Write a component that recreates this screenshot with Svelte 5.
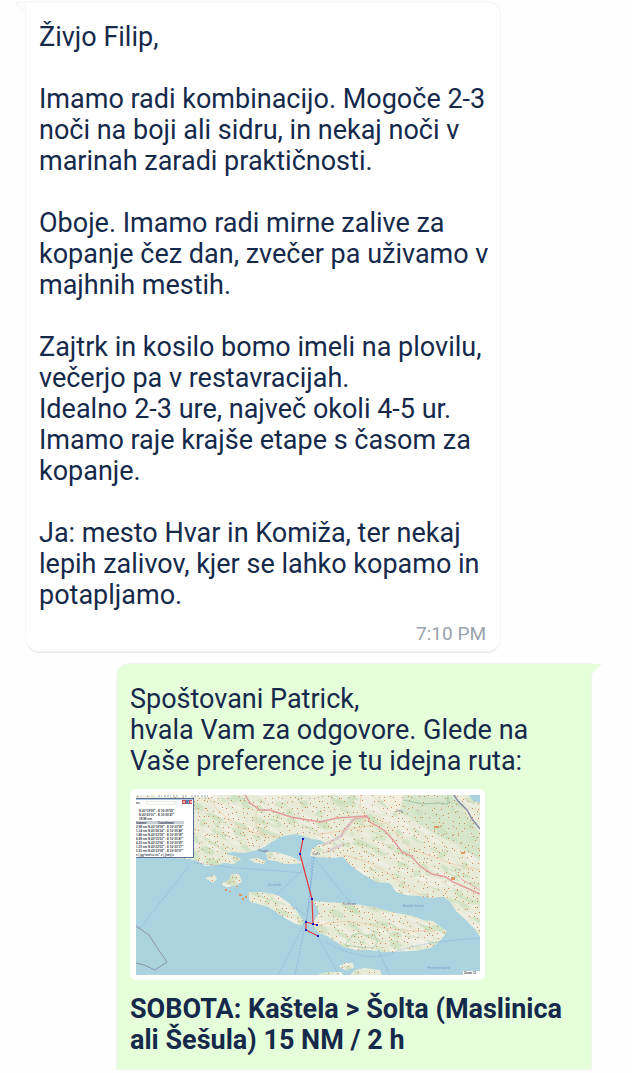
<script lang="ts">
	interface Message {
		side: 'in' | 'out';
		text: string;
		time?: string;
		map?: boolean;
		heading?: string;
	}

	const messages: Message[] = [
		{
			side: 'in',
			text: `Živjo Filip,

Imamo radi kombinacijo. Mogoče 2-3 noči na boji ali sidru, in nekaj noči v marinah zaradi praktičnosti.

Oboje. Imamo radi mirne zalive za kopanje čez dan, zvečer pa uživamo v majhnih mestih.

Zajtrk in kosilo bomo imeli na plovilu, večerjo pa v restavracijah.
Idealno 2-3 ure, največ okoli 4-5 ur. Imamo raje krajše etape s časom za kopanje.

Ja: mesto Hvar in Komiža, ter nekaj lepih zalivov, kjer se lahko kopamo in potapljamo.`,
			time: '7:10 PM'
		},
		{
			side: 'out',
			text: `Spoštovani Patrick,
hvala Vam za odgovore. Glede na Vaše preference je tu idejna ruta:`,
			map: true,
			heading: 'SOBOTA: Kaštela > Šolta (Maslinica ali Šešula) 15 NM / 2 h'
		}
	];

	const land = [
		'M0 0H344V142L337 132 329 124 320 116 314 107 308 102 295 103 283 101 270 100 260 97 257 92 253 88 243 88 237 85 228 80 220 74 213 69 207 62 193 63 180 62 174 61 176 54 182 50 190 48 184 45 176 44 170 42 160 39 147 41 137 46 128 52 117 56 108 58 96 57 90 59 98 61 105 64 98 69 88 68 78 71 69 71 60 65 53 64 0 60Z',
		'M112 97L122 97 133 98 141 100 147 104 154 109 160 115 167 125 167 130 160 129 151 124 142 118 132 112 122 109 114 107Z',
		'M177 106L190 107 203 108 220 109 237 112 256 117 277 121 287 125 297 126 303 131 311 136 308 141 302 148 294 153 280 156 250 157 234 155 220 155 208 152 200 147 191 141 183 138 178 131 178 126 183 118 181 112Z',
		'M129 57L140 57 150 60 157 62 163 66 168 68 158 69 148 69 140 66 132 65Z',
		'M113 64L121 63 130 66 128 69 119 68Z',
		'M69 83L79 80 81 84 77 88Z',
		'M87 88L94 84 95 79 103 79 106 87 99 91 90 92Z',
		'M86 88L96 88 94 91 87 91Z',
		'M203 171L209 168 217 168 218 173 209 175Z',
		'M183 179L193 177 205 177 207 180 183 180Z',
		'M214 180L219 175 229 173 244 175 246 180Z'
	];

	// Park-Miller generator, so the terrain is the same on every render
	let seed = 4711;
	function rand() {
		seed = (seed * 16807) % 2147483647;
		return seed / 2147483647;
	}

	const woods = Array.from({ length: 430 }, () => {
		const x = rand() * 344;
		const y = rand() * 180;
		return { x, y, rx: 2 + rand() * 8, ry: 1 + rand() * 3 };
	});
	const fields = Array.from({ length: 500 }, () => ({ x: rand() * 344, y: rand() * 180, r: 1 + rand() * 4 }));

	// one village per 5x5 cell, shifted inside it
	const villages: { x: number; y: number }[] = [];
	for (let y = 0; y < 180; y += 5) {
		for (let x = 0; x < 344; x += 5) {
			if (rand() < 0.8) villages.push({ x: Math.round(x + rand() * 4), y: Math.round(y + rand() * 4) });
		}
	}

	const waypoints = [
		[167, 44],
		[164, 59],
		[176, 104],
		[177, 129],
		[181, 130],
		[170, 127],
		[170, 135],
		[182, 141]
	];

	const legs = [
		"2.98 nm N 43°18'08\" - E 16°23'59\"",
		"1.14 nm N 43°26'34\" - E 16°20'48\"",
		"1.88 nm N 43°23'59\" - E 16°20'08\"",
		"6.98 nm N 43°15'52\" - E 16°20'47\"",
		"4.20 nm N 43°23'06\" - E 16°23'59\"",
		"1.20 nm N 43°22'52\" - E 16°23'17\"",
		"0.20 nm N 43°23'08\" - E 16°20'07\""
	];
</script>

<main class="chat">
	{#each messages as message}
		<article class="bubble {message.side}">
			<svg class="tail" viewBox="0 0 11 11" aria-hidden="true">
				{#if message.side === 'in'}
					<path d="M0 .5H11M0 .5L11 11" />
				{:else}
					<path d="M0 0H11L0 11Z" />
				{/if}
			</svg>
			<p class="text">{message.text}</p>
			{#if message.map}
				<div class="map">
					<svg viewBox="0 0 344 180" role="img" aria-label="Kaštela – Šolta">
						<defs>
							<clipPath id="land">
								{#each land as d}<path {d} />{/each}
							</clipPath>
						</defs>
						<rect width="344" height="180" fill="#aad3df" />

						<g clip-path="url(#land)">
							<rect width="344" height="180" fill="#e6ead6" />
							{#each woods as w}
								<ellipse cx={w.x} cy={w.y} rx={w.rx} ry={w.ry} transform="rotate(24 {w.x} {w.y})" fill="#cbdfbd" opacity=".65" />
							{/each}
							{#each fields as f}
								<ellipse cx={f.x} cy={f.y} rx={f.r * 2} ry={f.r / 2} transform="rotate(28 {f.x} {f.y})" fill="#f2efe6" opacity=".75" />
							{/each}
							<path d="M262 0H318L344 38V65L320 50 290 34 268 18Z" fill="#cbe0c2" opacity=".6" />
							<path d="M243 0H268L264 15 255 17Z" fill="#f1eedb" />
							<g fill="none" stroke="#ecd3b4" stroke-width="1">
								<path d="M70 0Q90 30 120 38T156 40M120 16V30L130 44M207 60Q235 65 260 84T330 125M180 40L250 28 275 54 320 70 344 75M183 130Q210 123 235 130T300 136" />
								<path d="M225 0L224 12 230 22 222 38" />
							</g>
							<path d="M186 50Q198 46 205 41L209 35 218 24M190 57L208 49" fill="none" stroke="#d0bec3" stroke-width="3" opacity=".6" />
							<g fill="#d68a50">
								{#each villages as v}
									<rect x={v.x} y={v.y} width="1" height="1" />
								{/each}
							</g>
							<path d="M217 140L225 138 230 141 238 139 242 147 237 153 222 152 209 150Z" fill="none" stroke="#a8c9a0" stroke-width=".8" />
							<path d="M267 5L287 9 301 8 312 9V0" fill="none" stroke="#9fcbb0" />
						</g>

						<path d="M333 0H344V8L337 6Z" fill="#aad3df" />
						<path d="M109 0L114 8 124 15 134 15 155 22 184 27 201 23 231 21 234 27 248 35 258 46 266 57 275 61 284 71 296 79 310 82 317 87 344 99" fill="none" stroke="#e49a9d" stroke-width="1.4" />
						<path d="M205 42L208 35 218 24 232 22M325 84L344 95" fill="none" stroke="#e7a6a8" />
						<path d="M318 0L322 6 331 15 336 24 344 34" fill="none" stroke="#8b8ca7" stroke-width="1.5" />
						<path d="M0 131L13 140 22 154 31 167 19 175 8 170 0 168" fill="none" stroke="#8f93ab" stroke-width="1" />

						<g fill="none" stroke="#86a9dc" stroke-width=".6" stroke-dasharray="2 1">
							<path d="M4 133L53 71M58 68L100 73 144 76 166 78M176 61L174 106 159 180M178 62L206 98 215 108M142 180L170 125M140 100L174 68M155 110L170 120M180 139L203 180M190 147Q230 169 256 158T344 143M242 155L254 180" />
							<path d="M178 62L170 130" stroke-width="1" />
						</g>
						<g class="sea">
							<text x="267" y="112">Brački kanal</text>
							<text x="132" y="91">Drvenik</text>
							<text x="291" y="174">Hvarski kanal</text>
						</g>
						<g class="towns">
							<text x="122" y="57">Trogir</text>
							<text x="176" y="60">Split</text>
							<text x="207" y="110">Sutivan</text>
							<text x="260" y="17">Sinj</text>
						</g>
						<g fill="#da9864">
							<path d="M89 94h2v2h-2zM93 96h2v1h-2zM103 99h3v2h-3zM106 103h2v2h-2zM109 101h2v2h-2zM100 91h2v1h-2z" />
							<path d="M298 31h5v2h-5zM315 82h4v3h-4zM325 57h4v2h-4z" />
						</g>

						<polyline points={waypoints.map((p) => p.join(',')).join(' ')} fill="none" stroke="#e8323c" stroke-width="1.2" />
						{#each waypoints as [x, y]}
							<rect x={x - 1} y={y - 1} width="2" height="2" fill="#1919cc" />
						{/each}

						<path d="M19 0H76V2H19Z" fill="#fff" />
						<path d="M22 1h4m2 0h7m2 0h5m4 0h6m3 0h8m2 0h7" stroke="#8ba8a8" stroke-dasharray="2 1" />
						<rect y="3" width="57" height="59" fill="#fff" />
						<path d="M0 3.5H57M57.5 3V62.5H0" fill="none" stroke="#596f9a" />
						<path d="M0 4.5H57" stroke="#b2c6df" />
						<rect x="10.5" y="6.5" width="29" height="3" fill="#fff" stroke="#ddd9c6" stroke-width=".5" />
						<rect x="46" y="5" width="10" height="4" fill="#d64b51" />
						<rect x="50" y="5" width="3" height="4" fill="#4b80b5" />
						<path d="M47 6l2 2m0-2l-2 2m5-1h1m1-1l2 2m0-2l-2 2" stroke="#fff" stroke-width=".6" />
						<rect y="26" width="48" height="3" fill="#c9ced6" />
						<g class="panel">
							<text x="0" y="9">ec:</text>
							<text x="3" y="17">N 43°19'59" - E 16°20'59"</text>
							<text x="3" y="21">N 43°22'00" - E 16°20'47"</text>
							<text x="3" y="25">18.98 nm</text>
							<text x="0" y="29">istance</text>
							<text x="22" y="29">Coordinate</text>
							{#each legs as leg, i}
								<text x="0" y={33 + i * 4}>{leg}</text>
							{/each}
							<text x="0" y="61">v | gg°mm'ss.ss" v | [nm] v</text>
						</g>
						<rect x="327" y="176" width="17" height="4" fill="#fff" />
						<text class="panel" x="328" y="179">Zoom 11</text>
					</svg>
				</div>
			{/if}
			{#if message.heading}
				<p class="text heading">{message.heading}</p>
			{/if}
			{#if message.time}
				<time>{message.time}</time>
			{/if}
		</article>
	{/each}
</main>

<style>
	:global(body) {
		margin: 0;
		background: #fefefe;
	}

	.chat {
		display: flex;
		flex-direction: column;
		gap: 13px;
		padding: 2px 41px 2px 26px;
		font-family: Roboto, sans-serif;
		color: #15294b;
	}

	.bubble {
		position: relative;
		box-sizing: border-box;
		width: 474px;
		max-width: 100%;
		padding: 20px 8px 13px 13px;
		border-radius: 13px;
	}

	.in {
		align-self: flex-start;
		padding-bottom: 4px;
		background: #fff;
		border-top-left-radius: 0;
		box-shadow: 0 0 0 1px #f5f5f5, 0 2px 0 #e8e8e8;
	}

	.out {
		align-self: flex-end;
		background: #e5ffdb;
		border-radius: 13px 0 0 0;
		box-shadow: 0 0 1px 1px #eef5eb;
	}

	.tail {
		position: absolute;
		top: 0;
		width: 11px;
		height: 11px;
	}

	.in .tail {
		right: 100%;
		fill: none;
		stroke: #f2f4f0;
	}

	.out .tail {
		left: 100%;
		fill: #e5ffdb;
	}

	.text {
		margin: 0;
		font-size: 27px;
		line-height: 31px;
		white-space: pre-wrap;
	}

	.heading {
		font-weight: 700;
	}

	time {
		display: block;
		margin: 10px 6px 0 0;
		font-size: 19px;
		line-height: 26px;
		text-align: right;
		color: #98a2ad;
	}

	.map {
		box-sizing: border-box;
		width: 355px;
		max-width: 100%;
		margin: 12px 0 14px;
		padding: 6px 5px 5px 6px;
		border-radius: 6px;
		background: #fff;
	}

	.map svg {
		display: block;
		width: 100%;
	}

	.sea {
		font-size: 4px;
		font-style: italic;
		fill: #799dcc;
	}

	.towns {
		font-size: 4px;
		fill: #6d6e90;
	}

	.panel {
		font-family: 'Liberation Sans', sans-serif;
		font-size: 3px;
		font-weight: 700;
		fill: #333b48;
	}
</style>
